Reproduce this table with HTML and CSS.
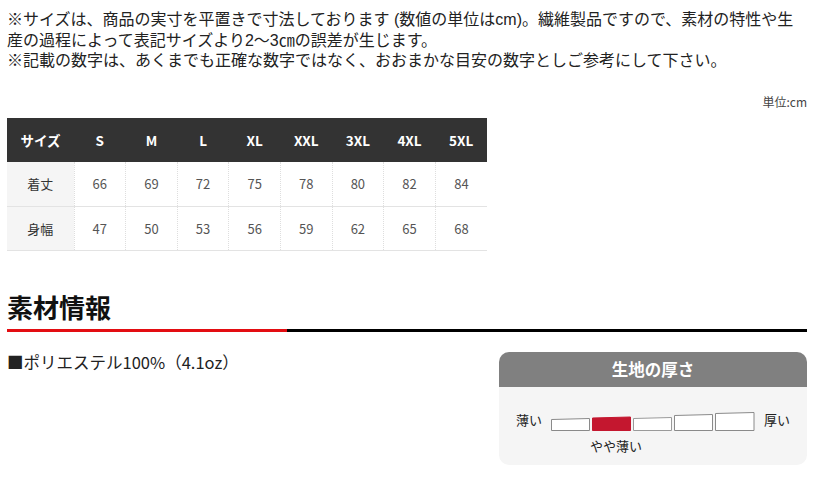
FILE: index.html
```html
<!DOCTYPE html>
<html lang="ja">
<head>
<meta charset="utf-8">
<link rel="stylesheet" href="styles.css">
</head>
<body>
<div class="page">
  <p class="notes">※サイズは、商品の実寸を平置きで寸法しております (数値の単位はcm)。繊維製品ですので、素材の特性や生<br>産の過程によって表記サイズより2～3㎝の誤差が生じます。<br>※記載の数字は、あくまでも正確な数字ではなく、おおまかな目安の数字としご参考にして下さい。</p>
  <div class="unit">単位:cm</div>
  <table class="size-table">
    <thead>
      <tr><th class="first">サイズ</th><th>S</th><th>M</th><th>L</th><th>XL</th><th>XXL</th><th>3XL</th><th>4XL</th><th>5XL</th></tr>
    </thead>
    <tbody>
      <tr><td class="first">着丈</td><td>66</td><td>69</td><td>72</td><td>75</td><td>78</td><td>80</td><td>82</td><td>84</td></tr>
      <tr><td class="first">身幅</td><td>47</td><td>50</td><td>53</td><td>56</td><td>59</td><td>62</td><td>65</td><td>68</td></tr>
    </tbody>
  </table>
  <h2 class="heading">素材情報</h2>
  <div class="rule"><div class="rule-red"></div><div class="rule-black"></div></div>
  <div class="material">
    <p class="material-text">■ポリエステル100%（4.1oz）</p>
    <div class="thick-box">
      <div class="thick-head">生地の厚さ</div>
      <div class="thick-body">
        <div class="thick-row">
          <span class="thin-label">薄い</span>
          <svg class="bars" width="204" height="21" viewBox="0 0 204 21">
            <polygon points="0.5,8.5 38.5,7.5 38.5,19.5 0.5,19.5" fill="#fff" stroke="#8a8a8a" stroke-width="1"/>
            <polygon points="41.5,7 79.5,6 79.5,19.5 41.5,19.5" fill="#c4172f" stroke="#c4172f" stroke-width="1"/>
            <polygon points="82.5,7.5 120.5,6.5 120.5,19.5 82.5,19.5" fill="#fff" stroke="#9a9a9a" stroke-width="1"/>
            <polygon points="123.5,4.5 161.5,3.5 161.5,19.5 123.5,19.5" fill="#fff" stroke="#8a8a8a" stroke-width="1"/>
            <polygon points="164.5,2.5 203,1.5 203,19.5 164.5,19.5" fill="#fff" stroke="#8a8a8a" stroke-width="1"/>
          </svg>
          <span class="thick-label">厚い</span>
        </div>
        <div class="current">やや薄い</div>
      </div>
    </div>
  </div>
</div>
</body>
</html>
```

FILE: styles.css
```css
* { box-sizing: border-box; }
html, body { margin: 0; padding: 0; background: #fff; }
body {
  font-family: "Noto Sans CJK JP", "Noto Sans", sans-serif;
  color: #222;
}
.page {
  width: 800px;
  margin-left: 7px;
}
.notes {
  margin: 0;
  padding-top: 10px;
  font-family: "Liberation Sans", "Noto Sans CJK JP", sans-serif;
  font-size: 16px;
  line-height: 20.5px;
  color: #222;
  white-space: nowrap;
}
.unit {
  margin-top: 22px;
  text-align: right;
  font-size: 12px;
  line-height: 16px;
  color: #444;
}
.size-table {
  margin-top: 8px;
  width: 480px;
  border-collapse: collapse;
  table-layout: fixed;
  font-size: 13px;
}
.size-table th {
  background: #333;
  color: #fff;
  font-weight: bold;
  font-size: 13.5px;
  height: 44px;
  padding: 0;
  text-align: center;
  width: 51.6px;
}
.size-table th.first { width: 67px; }
.size-table td {
  height: 44.5px;
  padding: 0;
  text-align: center;
  color: #555;
  border-bottom: 1px solid #e3e3e3;
  border-left: 1px dotted #dedede;
}
.size-table td.first {
  background: #f5f5f5;
  color: #333;
  border-left: none;
}
.heading {
  margin: 38px 0 0;
  font-size: 26px;
  line-height: 36px;
  font-weight: bold;
  color: #111;
  height: 40px;
}
.rule {
  display: flex;
  height: 3px;
}
.rule-red { width: 280px; background: #e30d12; }
.rule-black { flex: 1; background: #000; }
.material {
  display: flex;
  justify-content: space-between;
  align-items: flex-start;
  margin-top: 20px;
}
.material-text {
  margin: 0;
  font-family: "Noto Sans CJK JP", "Noto Sans", sans-serif;
  font-size: 16.5px;
  line-height: 20px;
  color: #222;
}
.thick-box {
  width: 308px;
  border-radius: 10px;
  overflow: hidden;
  background: #f5f5f5;
}
.thick-head {
  background: #808080;
  color: #fff;
  font-weight: bold;
  font-size: 16.5px;
  height: 35px;
  line-height: 35px;
  text-align: center;
}
.thick-body {
  height: 78px;
  padding-top: 24px;
}
.thick-row {
  display: flex;
  align-items: flex-end;
  padding-left: 17px;
}
.thin-label, .thick-label {
  font-size: 13px;
  line-height: 18px;
  color: #222;
  padding-bottom: 3px;
}
.bars {
  display: block;
  margin-left: 9px;
  margin-right: 9px;
}
.current {
  margin-top: 5px;
  padding-left: 91px;
  font-size: 13px;
  line-height: 18px;
  color: #222;
}
```
